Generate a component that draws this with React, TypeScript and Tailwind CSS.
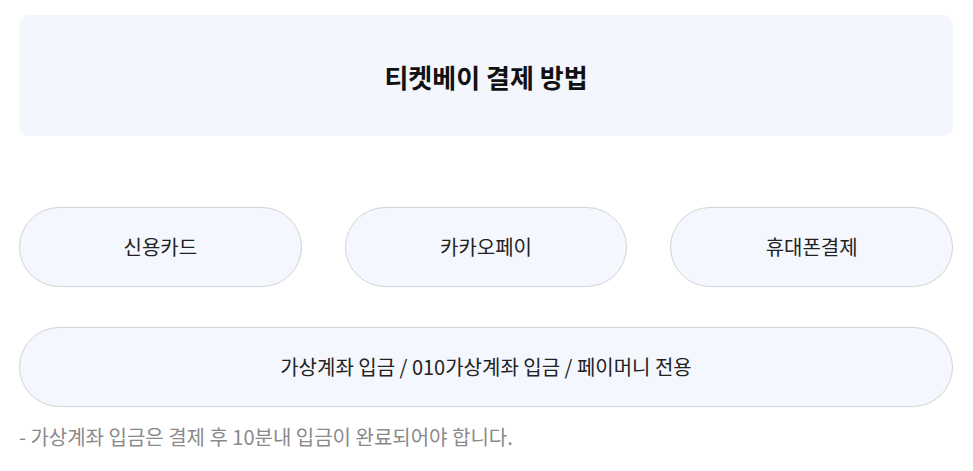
import React from 'react';

const methods = ['신용카드', '카카오페이', '휴대폰결제'];

const App: React.FC = () => {
  return (
    <div
      className="min-h-screen bg-white pl-[19px] pr-[20px] pt-[15px]"
      style={{ fontFamily: '"Noto Sans CJK KR", "Noto Sans", sans-serif' }}
    >
      {/* Title box */}
      <div className="flex h-[121px] items-center justify-center rounded-[10px] bg-[#f3f6fd] pt-[2px]">
        <h2 className="text-[26px] font-bold text-[#111]">티켓베이 결제 방법</h2>
      </div>

      {/* Payment methods */}
      <div className="mt-[71px] grid grid-cols-3 gap-x-[43px]">
        {methods.map((m) => (
          <button
            key={m}
            className="flex h-[80px] items-center justify-center rounded-full border border-[#d3d3d8] bg-[#f4f7fd] text-[20px] text-[#222]"
          >
            {m}
          </button>
        ))}
      </div>

      <button className="mt-[40px] flex h-[80px] w-full items-center justify-center rounded-full border border-[#d3d3d8] bg-[#f4f7fd] text-[20px] text-[#222]">
        가상계좌 입금 / 010가상계좌 입금 / 페이머니 전용
      </button>

      <p className="mt-[15px] text-[20px] text-[#8a8a8a]">
        - 가상계좌 입금은 결제 후 10분내 입금이 완료되어야 합니다.
      </p>
    </div>
  );
};

export default App;
